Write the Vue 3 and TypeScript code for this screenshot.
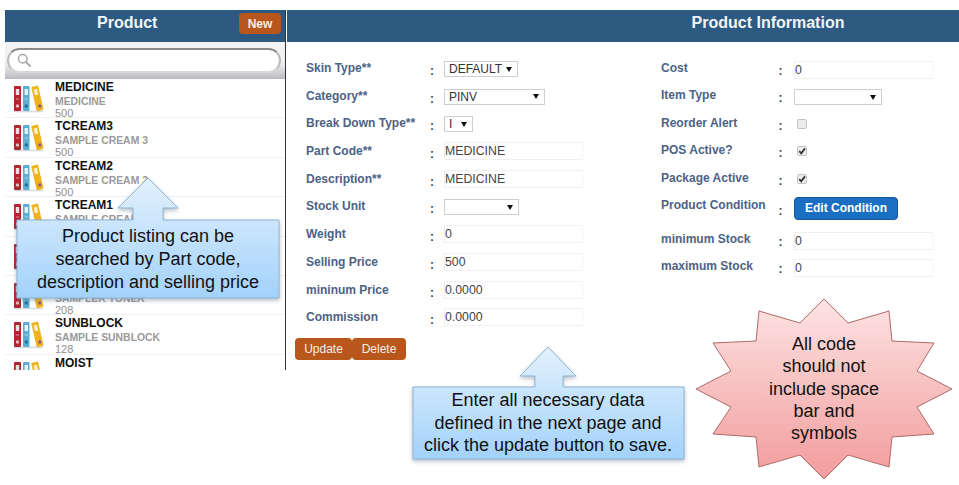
<template>
  <div class="page">
    <aside class="sidebar">
      <header class="side-head">
        <h2>Product</h2>
        <button class="btn new-btn">New</button>
      </header>
      <div class="search-bar">
        <div class="search-pill">
          <svg width="14" height="14" viewBox="0 0 14 14" class="search-icon">
            <circle cx="5.8" cy="5.8" r="4.3" fill="none" stroke="#a9a9a9" stroke-width="1.5" />
            <path d="M9 9l4 4" stroke="#a9a9a9" stroke-width="1.8" stroke-linecap="round" />
          </svg>
        </div>
      </div>
      <ul class="product-list">
        <li v-for="(item, i) in products" :key="i" class="product-row">
          <svg class="binders" width="32" height="28" viewBox="0 0 32 28">
            <path d="M1 26.500h29" stroke="#d5dbe2" stroke-width="1.500" />
            <rect x="1" y="1" width="7" height="25" rx="1" fill="#b4232f" />
            <rect x="10" y="1" width="6.500" height="25" rx="1" fill="#5aaed2" />
            <rect x="21" y="1" width="7" height="25" rx="1" fill="#efb31d" transform="rotate(-13 24 14)" />
            <rect x="2.800" y="4" width="3.400" height="6" fill="#e9dfe0" />
            <rect x="11.600" y="4" width="3.400" height="6" fill="#e4f1f7" />
            <rect x="22.800" y="4" width="3.400" height="6" fill="#fbf0cf" transform="rotate(-13 24 14)" />
            <path d="M2.800 14h3.400M11.600 14h3.400" stroke="#ffffff" stroke-opacity="0.5" />
            <circle cx="4.500" cy="21" r="1.700" fill="#e7bcc0" />
            <circle cx="13.300" cy="21" r="1.700" fill="#1f6f92" />
            <circle cx="26.800" cy="21" r="1.700" fill="#8e5a7e" />
          </svg>
          <div class="product-text">
            <div class="product-code">{{ item.code }}</div>
            <div class="product-desc">{{ item.desc }}</div>
            <div class="product-price">{{ item.price }}</div>
          </div>
        </li>
      </ul>
    </aside>

    <main class="main">
      <header class="main-head">
        <h2>Product Information</h2>
      </header>
      <div class="form-area">
        <div class="col col-left">
          <div v-for="f in leftFields" :key="f.label" class="field">
            <label>{{ f.label }}</label>
            <span class="colon">:</span>
            <div v-if="f.kind === 'select'" class="fake-select" :style="{ width: f.width + 'px' }">
              <span>{{ f.value }}</span><i class="arrow"></i>
            </div>
            <input v-else class="text-input" type="text" :value="f.value" />
          </div>
          <div class="actions">
            <button class="btn">Update</button>
            <button class="btn">Delete</button>
          </div>
        </div>

        <div class="col col-right">
          <div v-for="f in rightFields" :key="f.label" class="field" :class="{ tall: f.kind === 'button' }">
            <label>{{ f.label }}</label>
            <span class="colon">:</span>
            <div v-if="f.kind === 'select'" class="fake-select" :style="{ width: f.width + 'px' }">
              <span>{{ f.value }}</span><i class="arrow"></i>
            </div>
            <span v-else-if="f.kind === 'check'" class="check">
              <svg v-if="f.checked" width="10" height="10" viewBox="0 0 10 10">
                <path d="M2.200 5.200l2 2.200 3.800-5" fill="none" stroke="#333" stroke-width="1.800" />
              </svg>
            </span>
            <button v-else-if="f.kind === 'button'" class="edit-btn">Edit Condition</button>
            <input v-else class="text-input" type="text" :value="f.value" />
          </div>
        </div>
      </div>
    </main>

    <!-- callouts sit on top of the screen -->
    <div class="callout callout-list">
      <svg width="270" height="128" viewBox="0 0 270 128">
        <defs>
          <linearGradient id="blueList" x1="0" y1="0" x2="0" y2="1">
            <stop offset="0" stop-color="#e3f1fd" />
            <stop offset="1" stop-color="#a2d2fb" />
          </linearGradient>
        </defs>
        <path
          d="M134 3L164 33H149V45H265V123H3V45H119V33H104Z"
          fill="url(#blueList)"
          stroke="#8fb4d4"
        />
      </svg>
      <p>Product listing can be<br />searched by Part code,<br />description and selling price</p>
    </div>

    <div class="callout callout-save">
      <svg width="280" height="120" viewBox="0 0 280 120">
        <defs>
          <linearGradient id="blueSave" x1="0" y1="0" x2="0" y2="1">
            <stop offset="0" stop-color="#e3f1fd" />
            <stop offset="1" stop-color="#a2d2fb" />
          </linearGradient>
        </defs>
        <path
          d="M138 2L166 31H153V42H274V114H3V42H125V31H110Z"
          fill="url(#blueSave)"
          stroke="#8fb4d4"
        />
      </svg>
      <p>Enter all necessary data<br />defined in the next page and<br />click the update button to save.</p>
    </div>

    <div class="callout callout-star">
      <svg width="269" height="195" viewBox="0 0 269 195">
        <defs>
          <linearGradient id="pinkStar" x1="0" y1="0" x2="0" y2="1">
            <stop offset="0" stop-color="#fde3e3" />
            <stop offset="1" stop-color="#f29c9c" />
          </linearGradient>
        </defs>
        <polygon
          :points="starPoints"
          fill="url(#pinkStar)"
          stroke="#b06a6a"
          stroke-width="1"
        />
      </svg>
      <p>All code<br />should not<br />include space<br />bar and<br />symbols</p>
    </div>
  </div>
</template>

<script setup lang="ts">
interface Field {
  label: string
  kind: 'text' | 'select' | 'check' | 'button'
  value?: string
  width?: number
  checked?: boolean
}

// the fifth row lies wholly behind the callout, and only the name of the last row shows
const products = [
  { code: 'MEDICINE', desc: 'MEDICINE', price: '500' },
  { code: 'TCREAM3', desc: 'SAMPLE CREAM 3', price: '500' },
  { code: 'TCREAM2', desc: 'SAMPLE CREAM 2', price: '500' },
  { code: 'TCREAM1', desc: 'SAMPLE CREAM 1', price: '' },
  { code: '', desc: '', price: '' },
  { code: 'TONER', desc: 'SAMPLER TONER', price: '208' },
  { code: 'SUNBLOCK', desc: 'SAMPLE SUNBLOCK', price: '128' },
  { code: 'MOIST', desc: '', price: '' },
]

const leftFields: Field[] = [
  { label: 'Skin Type**', kind: 'select', value: 'DEFAULT', width: 74 },
  { label: 'Category**', kind: 'select', value: 'PINV', width: 101 },
  { label: 'Break Down Type**', kind: 'select', value: 'I', width: 29 },
  { label: 'Part Code**', kind: 'text', value: 'MEDICINE' },
  { label: 'Description**', kind: 'text', value: 'MEDICINE' },
  { label: 'Stock Unit', kind: 'select', value: '', width: 75 },
  { label: 'Weight', kind: 'text', value: '0' },
  { label: 'Selling Price', kind: 'text', value: '500' },
  { label: 'mininum Price', kind: 'text', value: '0.0000' },
  { label: 'Commission', kind: 'text', value: '0.0000' },
]

const rightFields: Field[] = [
  { label: 'Cost', kind: 'text', value: '0' },
  { label: 'Item Type', kind: 'select', value: '', width: 88 },
  { label: 'Reorder Alert', kind: 'check', checked: false },
  { label: 'POS Active?', kind: 'check', checked: true },
  { label: 'Package Active', kind: 'check', checked: true },
  { label: 'Product Condition', kind: 'button' },
  { label: 'minimum Stock', kind: 'text', value: '0' },
  { label: 'maximum Stock', kind: 'text', value: '0' },
]

// traced from the reference, in the svg's own coordinates
const starPoints = [
  [134, 9], [158, 33], [199, 21], [202, 51], [244, 53], [227, 81], [262, 99], [227, 117],
  [244, 144], [202, 147], [199, 177], [158, 165], [134, 189], [110, 165], [69, 177], [66, 147],
  [23, 144], [41, 117], [6, 99], [41, 81], [23, 53], [66, 51], [69, 21], [110, 33],
]
  .map((p) => p.join(','))
  .join(' ')
</script>

<style>
html,
body {
  margin: 0;
  background: #fff;
}
</style>

<style scoped>
.page {
  position: relative;
  width: 959px;
  height: 485px;
  overflow: hidden;
  display: flex;
  align-items: flex-start;
  padding: 10px 0 0 5px;
  box-sizing: border-box;
  font-family: "Liberation Sans", Arial, sans-serif;
  background: #fff;
}

h2 {
  margin: 0;
  color: #f2f5f8;
  font-size: 16px;
  line-height: 18px;
  font-weight: bold;
}

.sidebar {
  width: 281px;
  height: 360px;
  flex: none;
  box-sizing: border-box;
  border-right: 1px solid #333;
  overflow: hidden;
}

.side-head {
  height: 32px;
  background: #2c5a80;
  display: flex;
  align-items: flex-start;
  justify-content: space-between;
  padding: 3px 4px 0 92px;
  box-sizing: border-box;
}

.side-head h2 {
  margin-top: 1px;
}

.btn {
  border: none;
  background: #b8561c;
  color: #f6efe6;
  font-family: inherit;
  font-size: 12px;
  border-radius: 4px;
  height: 22px;
  padding: 0 6px;
}

.new-btn {
  width: 42px;
  height: 21px;
  font-weight: bold;
  padding: 0;
}

.search-bar {
  height: 37px;
  padding: 6px 4px 0 2px;
  box-sizing: border-box;
  background: linear-gradient(#f4f4f6 0%, #ededf0 60%, #b9b9c0 100%);
}

.search-pill {
  height: 25px;
  box-sizing: border-box;
  background: #fff;
  border: 2px solid #8a8a8a;
  border-bottom-color: #d8d8dc;
  border-left-color: #bbb;
  border-right-color: #bbb;
  border-radius: 13px;
  padding: 3px 0 0 8px;
}

.search-icon {
  display: block;
}

.product-list {
  list-style: none;
  margin: 0;
  padding: 0;
}

.product-row {
  height: 39.4px;
  box-sizing: border-box;
  display: flex;
  align-items: flex-start;
  padding-left: 8px;
  border-bottom: 1px solid #f0f0f0;
}

.binders {
  flex: none;
  margin-top: 6px;
}

.product-text {
  margin-left: 10px;
  margin-top: 1px;
}

.product-code {
  font-size: 12px;
  line-height: 14px;
  font-weight: bold;
  color: #111;
}

.product-desc {
  font-size: 10.4px;
  line-height: 13px;
  margin-top: 1px;
  font-weight: bold;
  color: #9a9a9a;
}

.product-price {
  font-size: 11px;
  line-height: 11px;
  color: #8f8f8f;
}

.main {
  flex: 1;
  margin-left: 1px;
}

.main-head {
  height: 32px;
  box-sizing: border-box;
  background: #2c5a80;
  display: flex;
  align-items: center;
  justify-content: center;
  padding: 0 0 6px 290px;
}

.form-area {
  display: flex;
  padding-top: 19px;
}

.col-left {
  width: 374px;
  flex: none;
  padding-left: 19px;
  box-sizing: border-box;
}

.col-right {
  width: 290px;
  flex: none;
}

.field {
  display: grid;
  grid-template-columns: 124px 14px 1fr;
  height: 27.7px;
  align-items: start;
}

.col-right .field {
  grid-template-columns: 117.500px 15.500px 1fr;
  height: 27.4px;
}

.col-right .field.tall {
  height: 34px;
}

.field label {
  font-size: 12px;
  line-height: 15px;
  font-weight: bold;
  color: #4c6286;
  white-space: nowrap;
}

.colon {
  font-size: 12px;
  line-height: 16px;
  font-weight: bold;
  color: #444;
  padding-top: 2px;
}

.tall .colon {
  padding-top: 5px;
}

.fake-select {
  height: 16px;
  box-sizing: border-box;
  border: 1px solid #cfcfcf;
  background: #fff;
  display: flex;
  align-items: center;
  justify-content: space-between;
  padding: 0 5px 0 4px;
  font-size: 12px;
  color: #333;
}

.col-right .fake-select {
  margin-top: 1px;
}

.arrow {
  width: 0;
  height: 0;
  border-left: 3px solid transparent;
  border-right: 3px solid transparent;
  border-top: 5px solid #111;
}

.text-input {
  width: 139px;
  height: 18px;
  box-sizing: border-box;
  border: 1px solid #f0f0f0;
  border-right-color: #f6f6f6;
  padding: 0;
  margin-top: -2px;
  font-family: inherit;
  font-size: 12.3px;
  color: #444;
  background: #fff;
  outline: none;
}

.col-right .text-input {
  margin-top: 0;
}

.check {
  width: 10px;
  height: 10px;
  margin: 3px 0 0 3px;
  box-sizing: border-box;
  border: 1px solid #c4c4c4;
  border-radius: 2px;
  background: #ececec;
  display: block;
}

.check svg {
  display: block;
  margin: -1px;
}

.edit-btn {
  width: 104px;
  height: 23px;
  border: 1px solid #12569c;
  border-radius: 4px;
  background: #1a6fc2;
  color: #fff;
  font-family: inherit;
  font-size: 12px;
  font-weight: bold;
  padding: 0;
  margin-top: -1px;
}

.actions {
  display: flex;
  margin-left: -11px;
}

.actions .btn:first-child {
  width: 57px;
}

.actions .btn:last-child {
  width: 54px;
}

.callout {
  position: absolute;
  color: #111;
  font-size: 18px;
  text-align: center;
}

.callout svg {
  display: block;
  overflow: visible;
}

.callout p {
  position: absolute;
  margin: 0;
  left: 0;
}

.callout-list {
  left: 14px;
  top: 175px;
  width: 270px;
  height: 128px;
}

.callout-list svg,
.callout-save svg {
  filter: drop-shadow(0 2px 2px rgba(90, 110, 130, 0.45));
}

.callout-list p {
  top: 50px;
  width: 268px;
  line-height: 23px;
}

.callout-save {
  left: 410px;
  top: 345px;
  width: 280px;
  height: 120px;
}

.callout-save p {
  top: 44px;
  width: 276px;
  line-height: 22.5px;
}

.callout-star {
  left: 690px;
  top: 290px;
  width: 269px;
  height: 195px;
}

.callout-star p {
  top: 43px;
  width: 268px;
  line-height: 22.3px;
}
</style>
